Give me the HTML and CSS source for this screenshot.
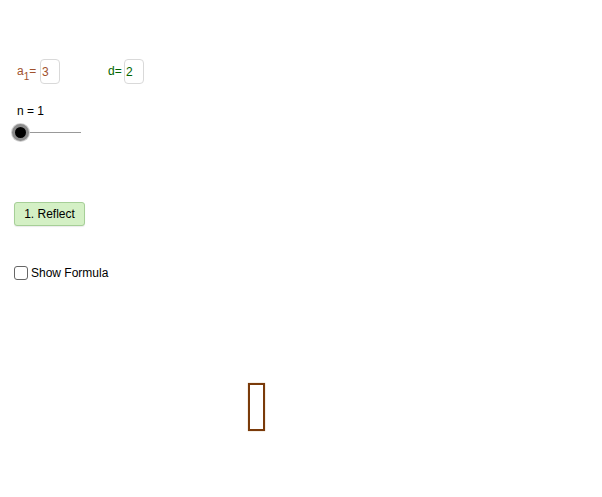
FILE: index.html
```html
<!DOCTYPE html>
<html>
<head>
<meta charset="utf-8">
<link rel="stylesheet" href="styles.css">
</head>
<body>
<div class="applet">
  <div class="controls">
    <div class="inputs">
      <div class="field a1">
        <span class="lbl">a<sub>1</sub>=</span>
        <span class="box">3</span>
      </div>
      <div class="field dd">
        <span class="lbl">d=</span>
        <span class="box">2</span>
      </div>
    </div>
    <div class="slider">
      <div class="slabel">n = 1</div>
      <div class="track"><span class="knob"></span></div>
    </div>
    <button class="btn">1. Reflect</button>
    <label class="check"><span class="cb"></span>Show Formula</label>
  </div>
  <div class="bar"></div>
</div>
</body>
</html>
```
FILE: styles.css
```css
html, body {
  margin: 0;
  padding: 0;
  background: #fff;
}
body {
  font-family: "Liberation Sans", Arial, sans-serif;
  font-size: 12px;
  color: #000;
}
.applet {
  position: relative;
  width: 602px;
  height: 497px;
  overflow: hidden;
}
.controls {
  display: flex;
  flex-direction: column;
  align-items: flex-start;
  padding: 59px 0 0 14px;
}
.inputs {
  display: flex;
  align-items: center;
  height: 25px;
}
.field {
  display: flex;
  align-items: center;
}
.a1 { color: #a0522d; margin-left: 3px; }
.dd { color: #006400; margin-left: 48px; }
.lbl {
  font-size: 12px;
  line-height: 13px;
}
.a1 .lbl { width: 23px; }
.dd .lbl { width: 16px; }
.lbl sub {
  font-size: 10px;
  vertical-align: -5px;
  line-height: 0;
  margin-left: 0;
}
.box {
  box-sizing: border-box;
  width: 20px;
  height: 25px;
  border: 1px solid #d9d9d9;
  border-radius: 4px;
  padding: 5px 0 0 1px;
  font-size: 12px;
  line-height: 14px;
}
.slider {
  margin-top: 21px;
  margin-left: 3px;
}
.slabel {
  line-height: 13px;
  height: 13px;
  font-size: 12px;
}
.track {
  position: relative;
  margin-top: 14px;
  margin-left: 3px;
  width: 61px;
  height: 1px;
  background: #999;
}
.knob {
  position: absolute;
  left: -8px;
  top: -8px;
  box-sizing: border-box;
  width: 17px;
  height: 17px;
  border-radius: 50%;
  background: #000;
  border: 3px solid #8c8c8c;
  box-shadow: 0 0 0 1px #d0d0d0;
}
.btn {
  margin-top: 69px;
  box-sizing: border-box;
  width: 71px;
  height: 24px;
  background: #d4f0c5;
  border: 1px solid #a6cf97;
  border-radius: 3px;
  font-family: "Liberation Sans", Arial, sans-serif;
  font-size: 12px;
  color: #000;
  padding: 0;
  box-shadow: 0 1px 1px rgba(0,0,0,0.08);
}
.check {
  display: flex;
  align-items: center;
  margin-top: 40px;
  font-size: 12px;
  line-height: 14px;
}
.cb {
  box-sizing: border-box;
  width: 14px;
  height: 14px;
  border: 1px solid #666;
  border-radius: 3px;
  margin-right: 3px;
  background: #fff;
}
.bar {
  position: absolute;
  left: 248px;
  top: 383px;
  box-sizing: border-box;
  width: 17px;
  height: 48px;
  border: 2px solid #7a3a0a;
  box-shadow: 0 0 1px rgba(150,100,30,0.6);
}
```
